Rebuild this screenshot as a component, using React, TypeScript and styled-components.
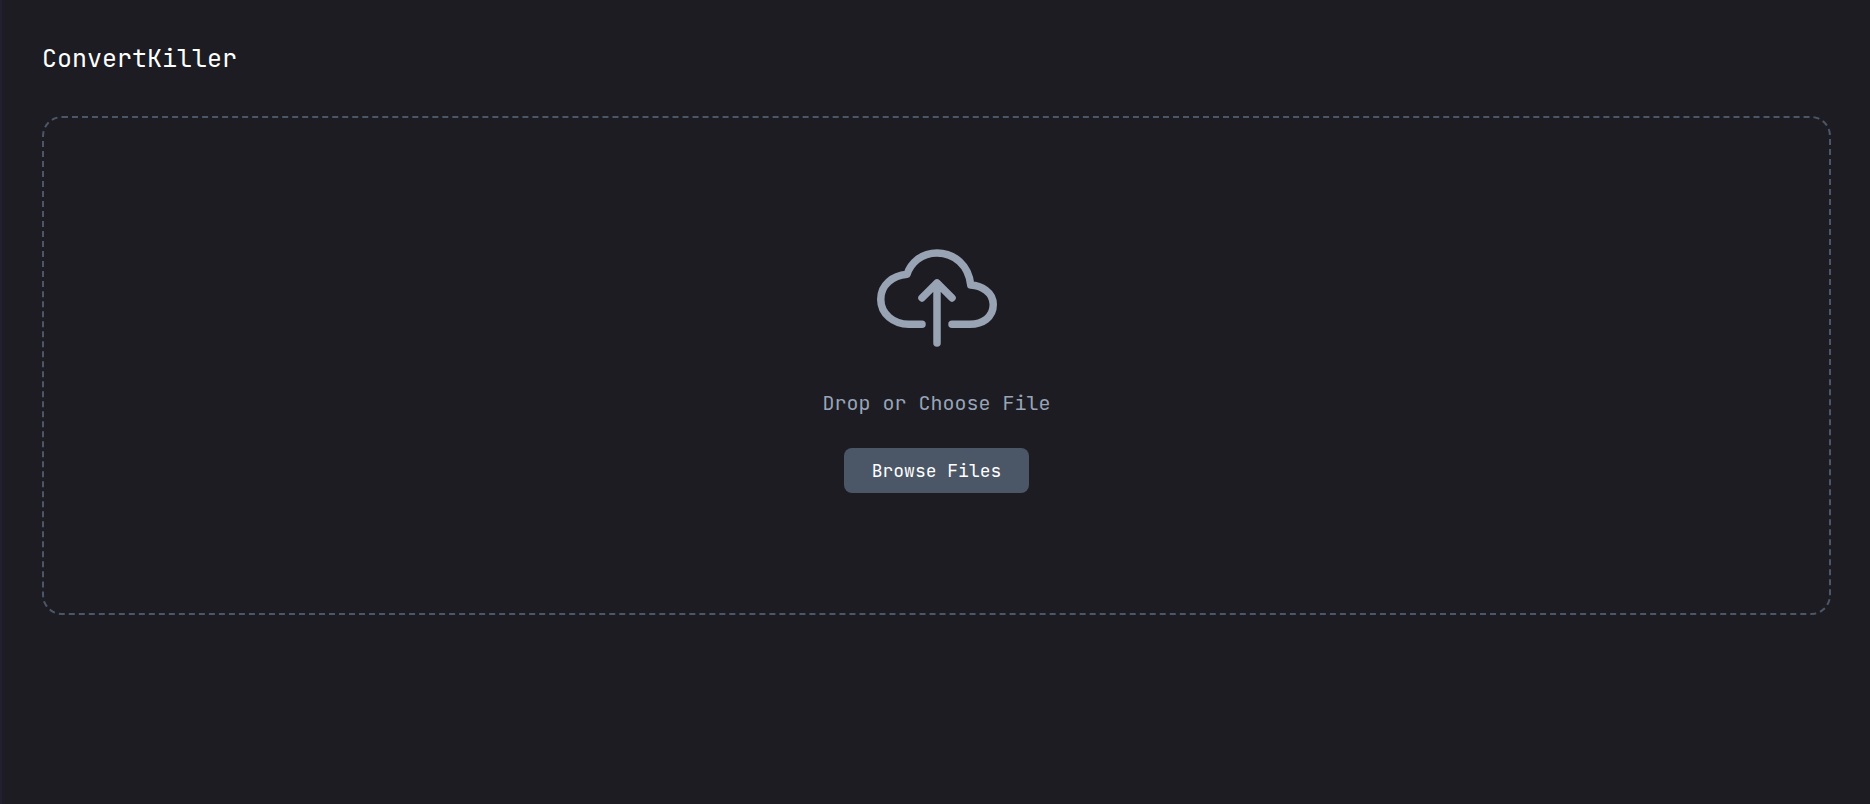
import React, { useRef } from "react";
import styled, { createGlobalStyle } from "styled-components";

const GlobalStyle = createGlobalStyle`
  *, *::before, *::after { box-sizing: border-box; }
  body {
    margin: 0;
    background: #1d1c22;
    font-family: "JetBrains Mono", "DejaVu Sans Mono", monospace;
  }
`;

const Page = styled.main`
  min-height: 100vh;
  padding: 40px 39px 40px 40px;
  border-left: 2px solid #211f30;
`;

const Title = styled.h1`
  margin: 0 0 40px;
  font-size: 25px;
  line-height: 36px;
  font-weight: 400;
  color: #ffffff;
`;

const DropZone = styled.section`
  display: flex;
  flex-direction: column;
  align-items: center;
  padding: 120px 20px;
  border: 2px dashed #4b5768;
  border-radius: 20px;
`;

const CloudIcon = styled.svg`
  display: block;
  width: 120px;
  height: 120px;
  fill: none;
  stroke: #98a3b3;
  stroke-width: 32;
  stroke-linecap: round;
  stroke-linejoin: round;
`;

const Hint = styled.label`
  margin: 30px 0;
  font-size: 20px;
  line-height: 30px;
  color: #98a5b8;
`;

const BrowseButton = styled.button`
  padding: 10px 28px;
  border: 0;
  border-radius: 8px;
  background: #4b5667;
  color: #ffffff;
  font-family: inherit;
  font-size: 18px;
  line-height: 25px;
  font-weight: 400;
  cursor: pointer;
`;

export default function App() {
  const picker = useRef<HTMLInputElement>(null);
  return (
    <>
      <GlobalStyle />
      <Page>
        <Title>ConvertKiller</Title>
        <DropZone>
          <CloudIcon viewBox="0 0 512 512" aria-hidden="true">
            <path d="M320 367.79h76c55 0 100-29.21 100-83.6s-53-81.47-96-83.6c-8.89-85.06-71-136.8-144-136.8-69 0-113.44 45.79-128 91.2-60 5.7-112 43.88-112 106.4s54 106.4 120 106.4h56" />
            <path d="M320 255.79l-64-64-64 64M256 448.21V207.79" />
          </CloudIcon>
          <Hint htmlFor="file">Drop or Choose File</Hint>
          <input id="file" ref={picker} type="file" hidden />
          <BrowseButton type="button" onClick={() => picker.current?.click()}>
            Browse Files
          </BrowseButton>
        </DropZone>
      </Page>
    </>
  );
}
